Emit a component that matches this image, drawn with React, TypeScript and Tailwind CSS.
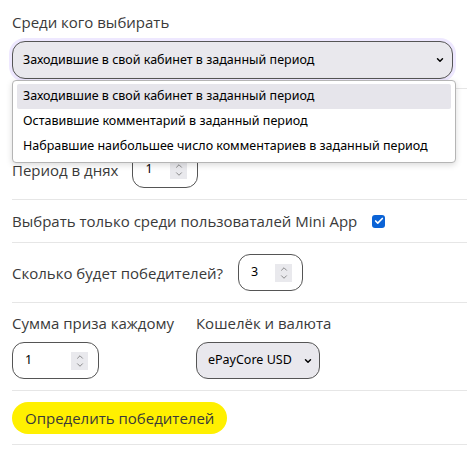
import { Check, ChevronDown, ChevronUp } from 'lucide-react';

const LABEL = "font-['Open_Sans',sans-serif] text-[15px] leading-[22px] text-[#3a3a3a]";
const SYS = "font-['Noto_Sans','Open_Sans',sans-serif] text-[12.5px] text-black";

const OPTIONS = [
  'Заходившие в свой кабинет в заданный период',
  'Оставившие комментарий в заданный период',
  'Набравшие наибольшее число комментариев в заданный период',
];

function NumberBox({ value, width }: { value: string; width: string }) {
  return (
    <div
      className={`flex h-[37px] items-center justify-between rounded-[12px] border border-[#555] bg-white pl-[12px] pr-[10px] ${width}`}
    >
      <span className={SYS}>{value}</span>
      <span className="flex h-[18px] w-[17px] flex-col items-center justify-center bg-[#e9e9ed] text-[#777]">
        <ChevronUp size={10} strokeWidth={2} className="-mb-[2px]" />
        <ChevronDown size={10} strokeWidth={2} />
      </span>
    </div>
  );
}

function Divider() {
  return <div className="h-px bg-[#e6e6e6]" />;
}

export default function App() {
  const selected = 0;

  return (
    <div className="min-h-[449px] w-[467px] bg-white pl-[12px]">
      <div className="relative">
        <div className="pr-[14px]">
          <div className={`${LABEL} pt-[11px]`}>Среди кого выбирать</div>
          <div className="mt-[8px] flex h-[38px] items-center justify-between rounded-[13px] border border-[#555] bg-[#e9e8ed] pl-[10px] pr-[7px] shadow-[0_0_0_3px_rgba(160,130,255,0.18)]">
            <span className={SYS}>{OPTIONS[selected]}</span>
            <ChevronDown size={10} strokeWidth={3.5} className="text-black" />
          </div>
        </div>
        <div className="mt-[9px]">
          <Divider />
        </div>

        <div className="flex items-center gap-[14px] pt-[62px] pb-[11px]">
          <span className={LABEL}>Период в днях</span>
          <NumberBox value="1" width="w-[66px]" />
        </div>
        <Divider />

        <div className="flex items-center gap-[15px] py-[10px]">
          <span className={LABEL}>Выбрать только среди пользоваталей Mini App</span>
          <span className="flex h-[13px] w-[13px] items-center justify-center rounded-[3px] bg-[#0b63d6]">
            <Check size={10} strokeWidth={4} className="text-white" />
          </span>
        </div>
        <Divider />

        <div className="flex items-center gap-[15px] py-[11px]">
          <span className={LABEL}>Сколько будет победителей?</span>
          <NumberBox value="3" width="w-[65px]" />
        </div>
        <Divider />

        <div className="flex gap-[22px] pt-[9px] pb-[11px]">
          <div className="flex flex-col gap-[8px]">
            <span className={LABEL}>Сумма приза каждому</span>
            <NumberBox value="1" width="w-[87px]" />
          </div>
          <div className="flex flex-col gap-[8px]">
            <span className={LABEL}>Кошелёк и валюта</span>
            <div className="flex h-[37px] w-[124px] items-center justify-between rounded-[12px] border border-[#555] bg-[#e9e8ed] pl-[11px] pr-[6px]">
              <span className={SYS}>ePayCore USD</span>
              <ChevronDown size={10} strokeWidth={3.5} className="text-black" />
            </div>
          </div>
        </div>
        <Divider />

        <div className="pt-[11px] pb-[10px]">
          <button className="h-[32px] rounded-full bg-[#fff000] px-[13px] font-['Open_Sans',sans-serif] text-[15px] text-[#3a3a3a]">
            Определить победителей
          </button>
        </div>
        <Divider />

        <div className="absolute top-[80px] left-0 w-[444px] rounded-[4px] border border-[#b5b5b5] bg-white py-[3px] shadow-[0_2px_6px_rgba(0,0,0,0.15)]">
          <div className="flex flex-col px-[4px]">
            {OPTIONS.map((o, i) => (
              <div
                key={o}
                className={`flex h-[25px] items-center rounded-[2px] pl-[6px] ${SYS} ${
                  i === selected ? 'bg-[#e6e5eb]' : ''
                }`}
              >
                {o}
              </div>
            ))}
          </div>
        </div>
      </div>
    </div>
  );
}
